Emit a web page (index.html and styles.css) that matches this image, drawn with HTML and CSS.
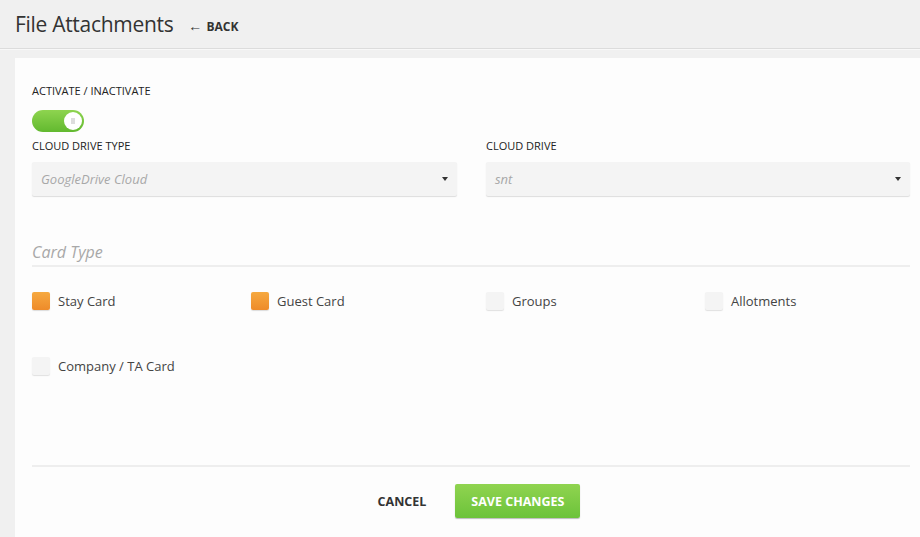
FILE: index.html
```
<!DOCTYPE html>
<html lang="en">
<head>
    <meta charset="UTF-8">
    <title>File Attachments</title>
    <link rel="stylesheet" href="styles.css">
</head>
<body>
    <div class="header">
        <h1>File Attachments</h1>
        <a class="back" href="#"><span class="arrow">&#8592;</span> BACK</a>
    </div>
    <div class="page">
        <div class="card">
            <div class="field">
                <label>ACTIVATE / INACTIVATE</label>
                <div class="toggle"><span class="knob"></span></div>
            </div>
            <div class="row">
                <div class="field">
                    <label>CLOUD DRIVE TYPE</label>
                    <div class="select">GoogleDrive Cloud<span class="caret"></span></div>
                </div>
                <div class="field">
                    <label>CLOUD DRIVE</label>
                    <div class="select">snt<span class="caret"></span></div>
                </div>
            </div>
            <h3 class="section">Card Type</h3>
            <div class="checks">
                <div class="check"><span class="box on"></span>Stay Card</div>
                <div class="check"><span class="box on"></span>Guest Card</div>
                <div class="check"><span class="box"></span>Groups</div>
                <div class="check"><span class="box"></span>Allotments</div>
                <div class="check"><span class="box"></span>Company / TA Card</div>
            </div>
            <div class="actions">
                <button class="cancel">CANCEL</button>
                <button class="save">SAVE CHANGES</button>
            </div>
        </div>
    </div>
</body>
</html>
```

FILE: styles.css
```
body {
    margin: 0;
    font-family: "Open Sans", "Liberation Sans", sans-serif;
    background: #f0f0f0;
    color: #333;
    overflow: hidden;
}
.header {
    height: 48px;
    display: flex;
    align-items: center;
    padding-left: 15px;
    border-bottom: 1px solid #dcdcdc;
    box-shadow: 0 1px 0 #f8f8f8;
}
.header h1 {
    margin: 0;
    font-size: 21px;
    font-weight: normal;
    color: #333;
    letter-spacing: -0.3px;
}
.back {
    margin-left: 15px;
    font-size: 12px;
    font-weight: bold;
    color: #333;
    text-decoration: none;
    margin-top: 2px;
}
.back .arrow {
    font-size: 14px;
    margin-right: 1px;
}
.page {
    padding: 9px 0 0 15px;
}
.card {
    background: #fdfdfd;
    padding: 25px 10px 0 17px;
    height: 454px;
}
.field label {
    display: block;
    font-size: 11px;
    font-weight: normal;
    color: #222;
    margin-bottom: 12px;
}
.toggle {
    width: 52px;
    height: 22px;
    border-radius: 11px;
    background: linear-gradient(#8ed44f, #62b92f);
    position: relative;
    margin-bottom: 6px;
}
.knob {
    position: absolute;
    right: 2px;
    top: 2px;
    width: 18px;
    height: 18px;
    border-radius: 50%;
    background: #fff;
}
.knob::after {
    content: "";
    position: absolute;
    left: 7px;
    top: 6px;
    width: 4px;
    height: 6px;
    background: #ddd;
}
.row {
    display: grid;
    grid-template-columns: 425px 424px;
    column-gap: 29px;
}
.row label {
    margin-bottom: 9px;
}
.select {
    height: 34px;
    line-height: 34px;
    background: #f4f4f4;
    box-shadow: 0 1px 1px #ddd;
    border-radius: 2px;
    padding-left: 9px;
    font-size: 13px;
    font-style: italic;
    color: #a8a8a8;
    position: relative;
}
.caret {
    position: absolute;
    right: 9px;
    top: 15px;
    border-left: 3px solid transparent;
    border-right: 3px solid transparent;
    border-top: 4px solid #333;
}
.section {
    margin: 45px 0 0 0;
    padding-bottom: 2px;
    width: 878px;
    border-bottom: 2px solid #eee;
    font-size: 16px;
    font-weight: normal;
    font-style: italic;
    color: #a8a8a8;
}
.checks {
    display: grid;
    grid-template-columns: 219px 235px 219px 205px;
    row-gap: 47px;
    margin-top: 25px;
}
.check {
    display: flex;
    align-items: center;
    font-size: 13px;
    color: #444;
    height: 18px;
}
.box {
    width: 18px;
    height: 18px;
    border-radius: 2px;
    background: #f4f4f4;
    box-shadow: 0 1px 1px #e0e0e0;
    margin-right: 8px;
}
.box.on {
    background: linear-gradient(#f6a940, #ee8b2a);
    box-shadow: 0 1px 1px #dcdcdc;
}
.actions {
    width: 878px;
    margin-top: 90px;
    border-top: 2px solid #eee;
    padding-top: 17px;
    display: flex;
    justify-content: center;
    align-items: center;
    gap: 17px;
    padding-left: 4px;
    box-sizing: border-box;
}
button {
    font-family: inherit;
    font-size: 12.5px;
    font-weight: bold;
    border: none;
    cursor: pointer;
}
.cancel {
    background: none;
    color: #333;
    padding: 0 12px;
}
.save {
    width: 125px;
    height: 34px;
    background: linear-gradient(#90d450, #6cc33a);
    color: #fff;
    border-radius: 2px;
    box-shadow: 0 1px 1px #bbb;
}
```
